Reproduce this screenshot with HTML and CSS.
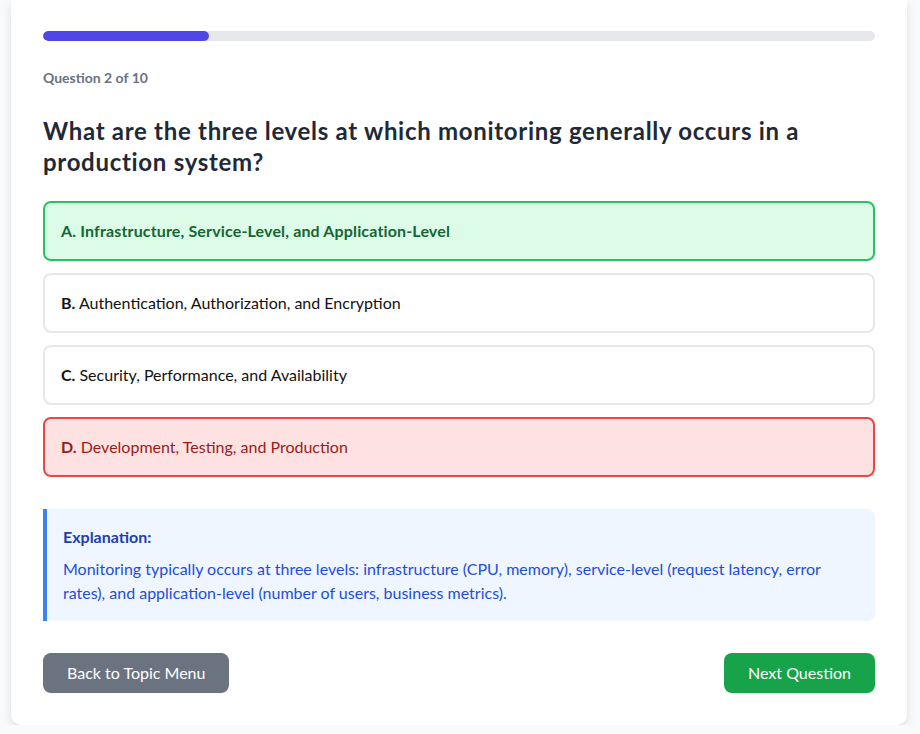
FILE: index.html
```html
<!DOCTYPE html>
<html lang="en">
<head>
<meta charset="utf-8">
<title>Quiz</title>
<link rel="stylesheet" href="styles.css">
</head>
<body>
<div class="card">
  <div class="progress"><div class="progress-fill" style="width:20%"></div></div>
  <div class="counter">Question 2 of 10</div>
  <h2 class="question">What are the three levels at which monitoring generally occurs in a production system?</h2>
  <div class="options">
    <div class="option correct"><b>A.</b> Infrastructure, Service-Level, and Application-Level</div>
    <div class="option"><b>B.</b> Authentication, Authorization, and Encryption</div>
    <div class="option"><b>C.</b> Security, Performance, and Availability</div>
    <div class="option wrong"><b>D.</b> Development, Testing, and Production</div>
  </div>
  <div class="explanation">
    <div class="exp-title">Explanation:</div>
    <p class="exp-text">Monitoring typically occurs at three levels: infrastructure (CPU, memory), service-level (request latency, error rates), and application-level (number of users, business metrics).</p>
  </div>
  <div class="actions">
    <button class="btn btn-gray">Back to Topic Menu</button>
    <button class="btn btn-green">Next Question</button>
  </div>
</div>
</body>
</html>
```
FILE: styles.css
```css
* { box-sizing: border-box; }
html, body { margin: 0; padding: 0; }
body {
  background: #f9fafb;
  font-family: "Lato", "Noto Sans", sans-serif;
  padding: 0 13px 0 11px;
}
.card {
  width: 896px;
  background: #fff;
  border-radius: 0 0 10px 10px;
  box-shadow: 0 4px 12px rgba(0,0,0,0.08), 0 2px 4px rgba(0,0,0,0.05);
  padding: 31px 32px 32px;
}
.progress {
  height: 10px;
  background: #e5e7eb;
  border-radius: 9999px;
  overflow: hidden;
}
.progress-fill {
  height: 100%;
  background: #4f46e5;
  border-radius: 9999px;
}
.counter {
  margin-top: 24px;
  font-size: 14px;
  line-height: 26px;
  font-weight: 700;
  color: #6b7280;
}
.question {
  margin: 24px 0 24px;
  font-size: 24px;
  line-height: 31px;
  font-weight: 700;
  letter-spacing: 0.7px;
  color: #1f2937;
}
.options {
  display: flex;
  flex-direction: column;
  gap: 12px;
}
.option {
  border: 2px solid #e5e7eb;
  border-radius: 8px;
  padding: 16px;
  font-size: 16px;
  line-height: 24px;
  color: #111;
  background: #fff;
}
.option b { font-weight: 700; }
.option.correct {
  background: #dcfce7;
  border-color: #22c55e;
  color: #166534;
  font-weight: 700;
  letter-spacing: 0.15px;
}
.option.wrong {
  background: #fee2e2;
  border-color: #ef4444;
  color: #991b1b;
}
.explanation {
  margin-top: 32px;
  background: #eff6ff;
  border-left: 4px solid #3b82f6;
  border-radius: 0 8px 8px 0;
  padding: 16px;
}
.exp-title {
  font-size: 16px;
  line-height: 24px;
  font-weight: 700;
  color: #1e40af;
}
.exp-text {
  margin: 8px 0 0;
  font-size: 16px;
  line-height: 24px;
  color: #1d4ed8;
}
.actions {
  margin-top: 32px;
  display: flex;
  justify-content: space-between;
}
.btn {
  border: none;
  border-radius: 8px;
  padding: 8px 24px;
  font-family: inherit;
  font-size: 16px;
  line-height: 24px;
  color: #fff;
  cursor: pointer;
}
.btn-gray { background: #6b7280; }
.btn-green { background: #16a34a; }
```
